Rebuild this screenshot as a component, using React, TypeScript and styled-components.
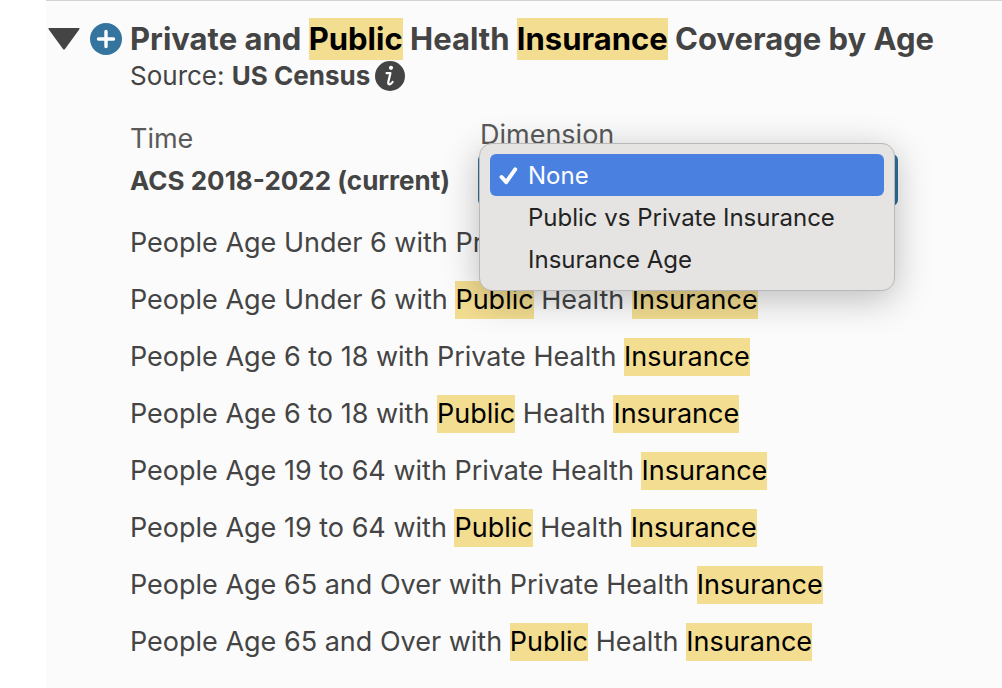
import React, { useState } from "react";
import styled, { createGlobalStyle, css } from "styled-components";

const GlobalStyle = createGlobalStyle`
  * { box-sizing: border-box; }
  body {
    margin: 0;
    background: #ffffff;
    color: #444444;
    font-family: Inter, "Liberation Sans", sans-serif;
    font-size: 27px;
    line-height: 32px;
  }
`;

const Panel = styled.main`
  display: flex;
  min-height: 100vh;
  margin-left: 46px;
  padding: 17px 0 27px 2px;
  border-top: 1px solid #d4d4d4;
  background: #fbfbfb;
`;

const Controls = styled.div`
  display: flex;
  align-items: center;
  gap: 10px;
  height: 42px;
  margin-right: 8px;
`;

const IconButton = styled.button`
  display: flex;
  padding: 0;
  border: 0;
  background: none;
  color: inherit;
  cursor: pointer;
`;

const Content = styled.div`
  flex: 1;
  min-width: 0;
`;

const Title = styled.h1`
  margin: 0;
  font-size: 31px;
  font-weight: 700;
  line-height: 42px;
`;

const Mark = styled.mark`
  display: inline-block;
  background: #f3dd91;
  color: #000000;
`;

const Source = styled.div`
  display: flex;
  align-items: center;
  gap: 5px;
  font-size: 26px;
`;

const Fields = styled.div`
  display: flex;
  margin: 27px 0 18px;
`;

const TimeField = styled.div`
  flex: 0 0 348px;
  padding-top: 4px;
`;

const FieldLabel = styled.div`
  color: #5a5a5a;
`;

const TimeValue = styled.div`
  margin-top: 10px;
  font-size: 26px;
  font-weight: 700;
`;

const DimensionField = styled.div`
  position: relative;
  width: 420px;
`;

const DimensionLabel = styled.label`
  display: block;
  padding-left: 2px;
  color: #5a5a5a;
`;

const Select = styled.select`
  display: block;
  width: 100%;
  height: 52px;
  margin-top: 3px;
  padding: 0 12px;
  border: 3px solid #2f709c;
  border-radius: 6px;
  background: #ffffff;
  color: #444444;
  font: inherit;
`;

const Menu = styled.div`
  position: absolute;
  top: 24px;
  left: 1px;
  width: 416px;
  padding: 10px;
  border: 1px solid #b9b8b7;
  border-radius: 13px;
  background: #e5e4e2;
  box-shadow: 0 8px 36px rgba(0, 0, 0, 0.26);
`;

const MenuItem = styled.button<{ $active: boolean }>`
  display: flex;
  align-items: center;
  width: 100%;
  height: 42px;
  padding: 2px 8px 0;
  border: 0;
  border-radius: 6px;
  background: none;
  color: #232323;
  font: inherit;
  font-size: 24px;
  text-align: left;
  white-space: nowrap;
  ${(p) =>
    p.$active &&
    css`
      background: #4a80e0;
      color: #ffffff;
    `}
`;

const CheckSlot = styled.span`
  display: flex;
  width: 30px;
`;

const Rows = styled.ul`
  display: flex;
  flex-direction: column;
  gap: 19px;
  margin: 0;
  padding: 0;
  list-style: none;
  line-height: 38px;
`;

const options = ["None", "Public vs Private Insurance", "Insurance Age"];

const ageGroups = ["Under 6", "6 to 18", "19 to 64", "65 and Over"];
const variables = ageGroups.flatMap((age) => [
  `People Age ${age} with Private Health Insurance`,
  `People Age ${age} with Public Health Insurance`,
]);

function Highlighted({ text }: { text: string }) {
  return (
    <>
      {text
        .split(/(Public|Insurance)/)
        .map((part, i) => (i % 2 ? <Mark key={i}>{part}</Mark> : part))}
    </>
  );
}

export default function App() {
  const [dimension, setDimension] = useState("None");
  return (
    <>
      <GlobalStyle />
      <Panel>
        <Controls>
          <IconButton aria-label="Collapse">
            <svg width="32" height="22" viewBox="0 0 32 22">
              <path d="M1.2 0H30.8Q32 0 31.4 1.2L17 21Q16 22.4 15 21L.6 1.2Q0 0 1.2 0Z" fill="#444" />
            </svg>
          </IconButton>
          <IconButton aria-label="Add">
            <svg width="32" height="32" viewBox="0 0 32 32">
              <circle cx="16" cy="16" r="16" fill="#3674a0" />
              <path d="M16 8.5V23.5M8.5 16H23.5" stroke="#fff" strokeWidth="3.4" strokeLinecap="round" />
            </svg>
          </IconButton>
        </Controls>
        <Content>
          <Title>
            <Highlighted text="Private and Public Health Insurance Coverage by Age" />
          </Title>
          <Source>
            <span>
              Source: <strong>US Census</strong>
            </span>
            <IconButton aria-label="About this source">
              <svg width="30" height="30" viewBox="0 0 30 30">
                <circle cx="15" cy="15" r="15" fill="#444" />
                <circle cx="16" cy="6.8" r="2.1" fill="#fff" />
                <path
                  d="M11.6 12.2H15.4L13.4 20.6C12.9 22.8 13.4 23.6 14.6 23.4C15.8 23.2 16.8 22.2 17.6 21"
                  fill="none"
                  stroke="#fff"
                  strokeWidth="2.2"
                  strokeLinecap="round"
                  strokeLinejoin="round"
                />
              </svg>
            </IconButton>
          </Source>
          <Fields>
            <TimeField>
              <FieldLabel>Time</FieldLabel>
              <TimeValue>ACS 2018-2022 (current)</TimeValue>
            </TimeField>
            <DimensionField>
              <DimensionLabel htmlFor="dimension">Dimension</DimensionLabel>
              <Select id="dimension" value={dimension} onChange={(e) => setDimension(e.target.value)}>
                {options.map((o) => (
                  <option key={o}>{o}</option>
                ))}
              </Select>
              <Menu role="listbox" aria-label="Dimension">
                {options.map((o) => (
                  <MenuItem
                    key={o}
                    role="option"
                    aria-selected={o === dimension}
                    $active={o === dimension}
                    onClick={() => setDimension(o)}
                  >
                    <CheckSlot>
                      {o === dimension && (
                        <svg width="21" height="20" viewBox="0 0 21 20">
                          <path
                            d="M3.6 11L8.2 16.2L17.2 3.4"
                            fill="none"
                            stroke="#fff"
                            strokeWidth="4"
                            strokeLinecap="round"
                            strokeLinejoin="round"
                          />
                        </svg>
                      )}
                    </CheckSlot>
                    {o}
                  </MenuItem>
                ))}
              </Menu>
            </DimensionField>
          </Fields>
          <Rows>
            {variables.map((v) => (
              <li key={v}>
                <Highlighted text={v} />
              </li>
            ))}
          </Rows>
        </Content>
      </Panel>
    </>
  );
}
